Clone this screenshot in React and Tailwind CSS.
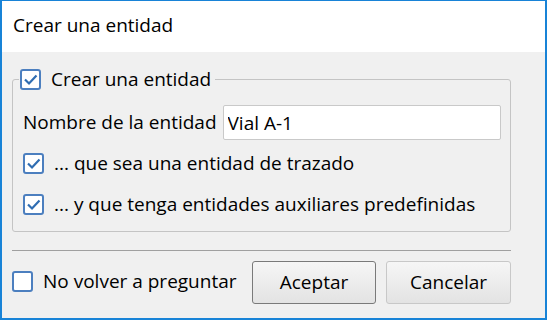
import React, { useState } from "react";

function Check({ checked, onChange }) {
  return (
    <button
      type="button"
      onClick={() => onChange(!checked)}
      className="flex h-[21px] w-[21px] shrink-0 items-center justify-center rounded-[3px] border-2 border-[#4c7fbf] bg-white"
    >
      {checked && (
        <svg width="15" height="13" viewBox="0 0 15 13">
          <path d="M2 6.5 L6 10.5 L13.5 2.5" fill="none" stroke="#2f6db2" strokeWidth="2.2" />
        </svg>
      )}
    </button>
  );
}

export default function App() {
  const [crear, setCrear] = useState(true);
  const [trazado, setTrazado] = useState(true);
  const [aux, setAux] = useState(true);
  const [noPreguntar, setNoPreguntar] = useState(false);
  const [nombre, setNombre] = useState("Vial A-1");

  return (
    <div
      className="flex h-[320px] w-[547px] flex-col border-x-2 border-t border-b-2 border-[#1883d7] text-[19px] text-black"
      style={{ fontFamily: "'Open Sans', 'Noto Sans', sans-serif" }}
    >
      <div className="flex h-[51px] shrink-0 items-center bg-white pl-[11px] pb-[2px]">Crear una entidad</div>
      <div className="flex flex-1 flex-col bg-[#f0f0f0] pl-[10px] pr-[34px]">
        <fieldset className="mt-[16px] rounded-[3px] border border-[#c4c4c4] pl-[10px] pr-[9px] pb-[14px]">
          <legend className="-ml-[4px] flex items-center gap-[10px] px-[1px] pr-[4px] leading-[22px]">
            <Check checked={crear} onChange={setCrear} />
            <span>Crear una entidad</span>
          </legend>
          <div className="mt-[15px] flex items-center gap-[6px]">
            <span className="whitespace-nowrap">Nombre de la entidad</span>
            <input
              value={nombre}
              onChange={(e) => setNombre(e.target.value)}
              className="h-[35px] min-w-0 flex-1 rounded-[2px] border border-[#c9c9c9] bg-white px-[4px] outline-none"
            />
          </div>
          <div className="mt-[10px] flex h-[26px] items-center gap-[10px]">
            <Check checked={trazado} onChange={setTrazado} />
            <span>... que sea una entidad de trazado</span>
          </div>
          <div className="mt-[15px] flex h-[26px] items-center gap-[10px]">
            <Check checked={aux} onChange={setAux} />
            <span>... y que tenga entidades auxiliares predefinidas</span>
          </div>
        </fieldset>
        <div className="mt-[18px] h-px bg-[#a0a0a0]" />
        <div className="mt-[10px] flex items-center">
          <div className="-mt-[2px] flex items-center gap-[10px]">
            <Check checked={noPreguntar} onChange={setNoPreguntar} />
            <span>No volver a preguntar</span>
          </div>
          <button
            type="button"
            className="ml-auto h-[43px] w-[124px] rounded-[3px] border border-[#7a7a7a] bg-gradient-to-b from-[#f6f6f6] to-[#e3e3e3]"
          >
            Aceptar
          </button>
          <button
            type="button"
            className="ml-[10px] h-[43px] w-[125px] rounded-[3px] border border-[#c8c8c8] bg-gradient-to-b from-[#f6f6f6] to-[#e3e3e3]"
          >
            Cancelar
          </button>
        </div>
      </div>
    </div>
  );
}
